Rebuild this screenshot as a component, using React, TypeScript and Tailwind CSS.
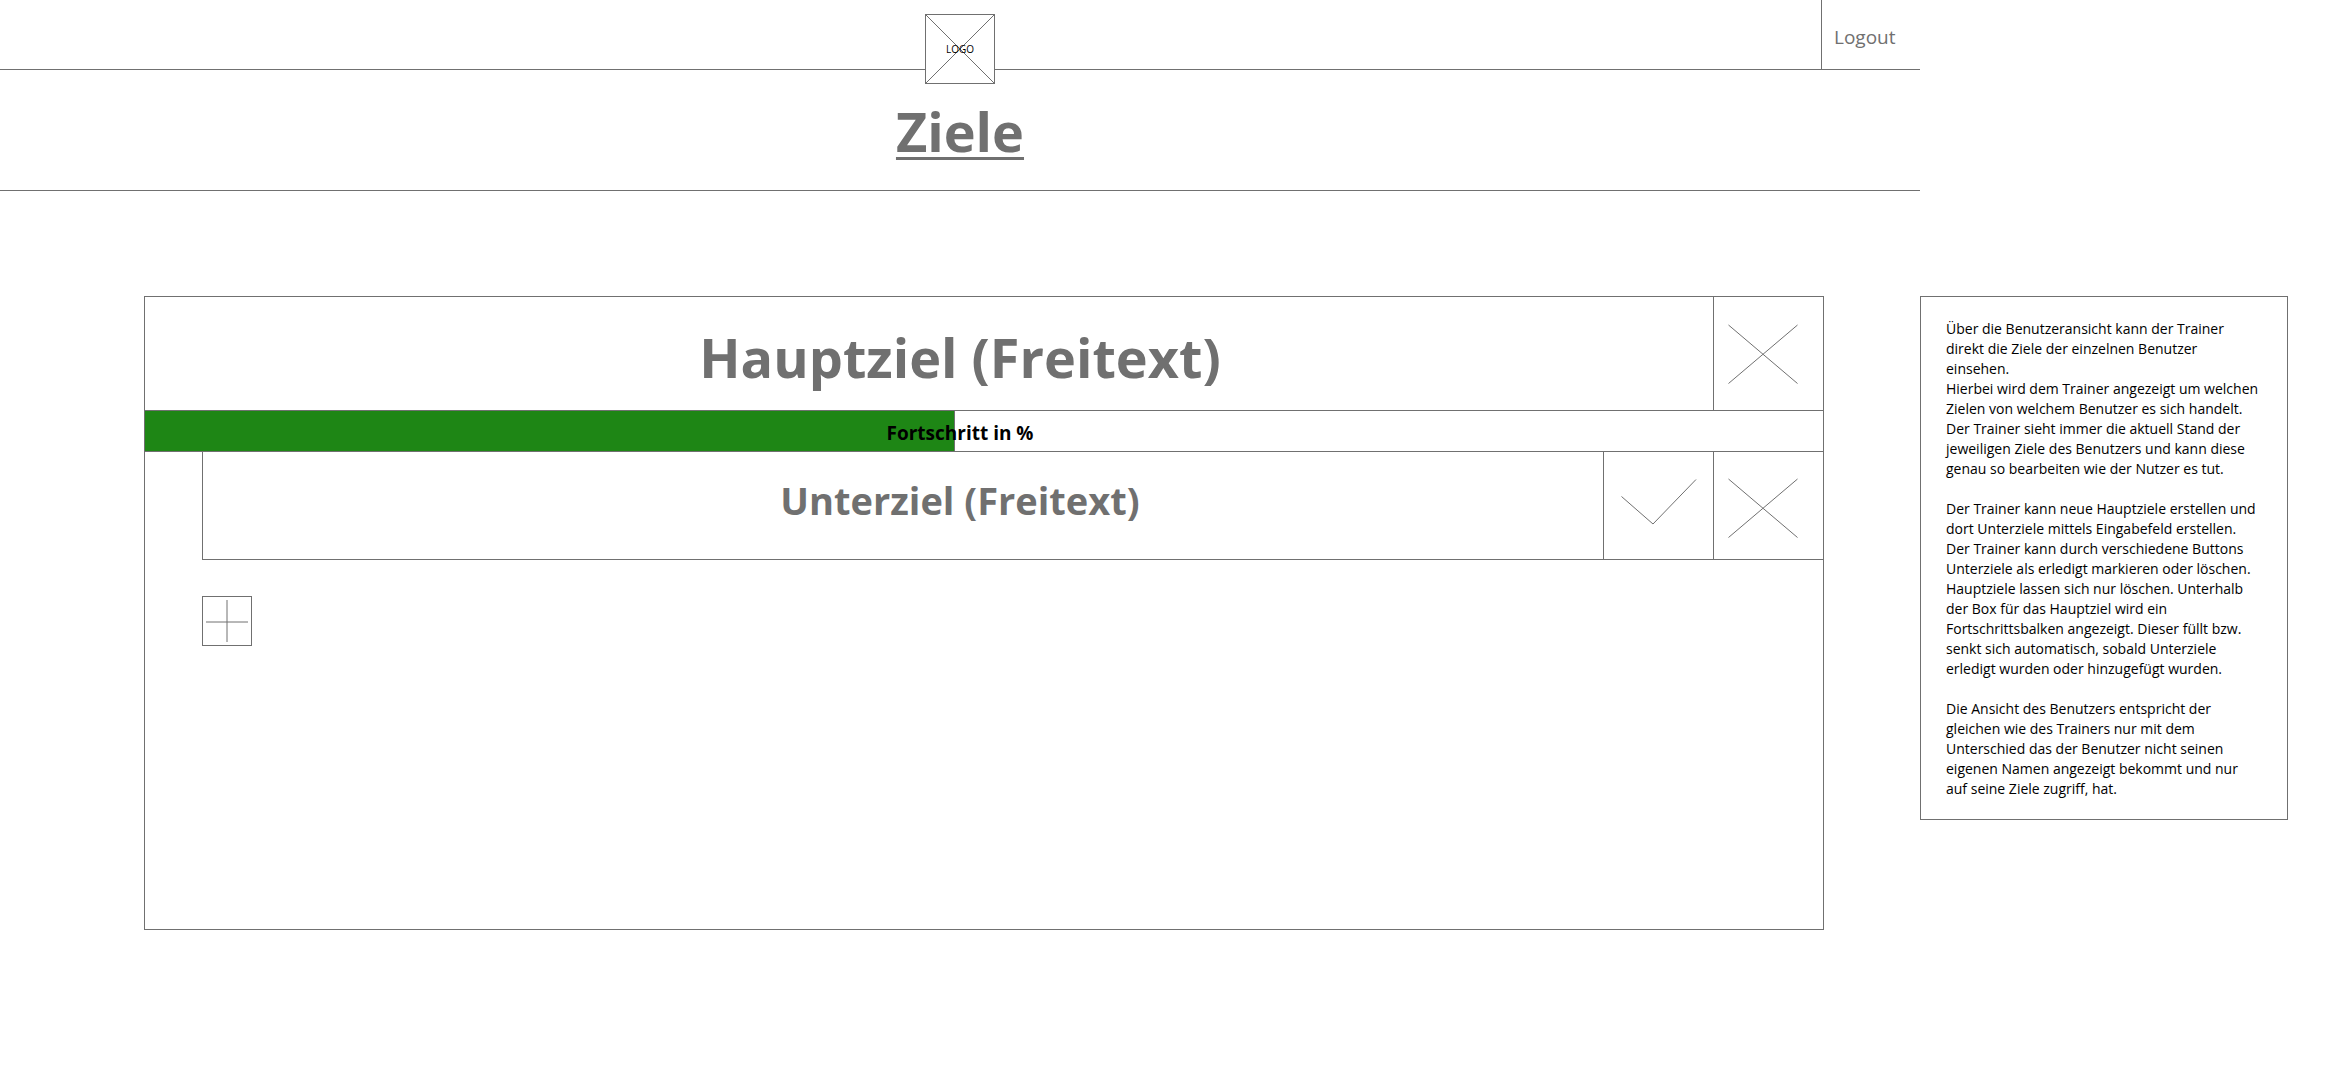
import React from "react";

const PROGRESS = 48.3;

const NOTES = [
  `Über die Benutzeransicht kann der Trainer
direkt die Ziele der einzelnen Benutzer
einsehen.
Hierbei wird dem Trainer angezeigt um welchen
Zielen von welchem Benutzer es sich handelt.
Der Trainer sieht immer die aktuell Stand der
jeweiligen Ziele des Benutzers und kann diese
genau so bearbeiten wie der Nutzer es tut.`,
  `Der Trainer kann neue Hauptziele erstellen und
dort Unterziele mittels Eingabefeld erstellen.
Der Trainer kann durch verschiedene Buttons
Unterziele als erledigt markieren oder löschen.
Hauptziele lassen sich nur löschen. Unterhalb
der Box für das Hauptziel wird ein
Fortschrittsbalken angezeigt. Dieser füllt bzw.
senkt sich automatisch, sobald Unterziele
erledigt wurden oder hinzugefügt wurden.`,
  `Die Ansicht des Benutzers entspricht der
gleichen wie des Trainers nur mit dem
Unterschied das der Benutzer nicht seinen
eigenen Namen angezeigt bekommt und nur
auf seine Ziele zugriff, hat.`,
];

function CrossIcon() {
  return (
    <svg width="70" height="60" viewBox="0 0 70 60" fill="none" stroke="#707070" aria-hidden="true">
      <path d="M0.5 1L69.5 59.5M69.5 1L0.5 59.5" />
    </svg>
  );
}

function CheckIcon() {
  return (
    <svg width="76" height="46" viewBox="0 0 76 46" fill="none" stroke="#707070" aria-hidden="true">
      <path d="M0.5 17.5L32 45L75 0.5" />
    </svg>
  );
}

function PlusIcon() {
  return (
    <svg width="48" height="48" viewBox="0 0 48 48" fill="none" stroke="#707070" aria-hidden="true">
      <path d="M3 25H45M24 3V45" />
    </svg>
  );
}

function Logo() {
  return (
    <div className="absolute left-1/2 top-3.5 grid size-[70px] -translate-x-1/2 place-items-center border border-[#707070] bg-white">
      <svg className="col-start-1 row-start-1" width="68" height="68" viewBox="0 0 68 68" stroke="#707070" aria-hidden="true">
        <path d="M0 0L68 68M68 0L0 68" />
      </svg>
      <span className="relative col-start-1 row-start-1 text-[10px] text-black">LOGO</span>
    </div>
  );
}

export default function App() {
  return (
    <div className="flex min-h-screen items-start bg-white font-['Open_Sans',sans-serif] text-[#707070]">
      <div className="min-w-0 flex-1">
        <header className="relative flex h-[70px] justify-end border-b border-[#707070]">
          <Logo />
          <a href="#logout" className="flex w-[99px] items-center border-l border-[#707070] pl-3 pt-1 text-[19px] leading-6 hover:underline">
            Logout
          </a>
        </header>
        <div className="flex h-[121px] items-center justify-center border-b border-[#707070] pt-0.5">
          <h1 className="text-[54px] font-bold leading-[64px] underline decoration-[3px] underline-offset-[5px]">Ziele</h1>
        </div>

        <main className="ml-36 mr-24 mt-[105px] min-h-[634px] border border-[#707070]">
          <div className="flex h-[114px] border-b border-[#707070]">
            <h2 className="flex flex-1 items-center justify-center pl-[62px] pt-1.5 text-[54px] font-bold leading-[64px]">
              Hauptziel (Freitext)
            </h2>
            <button type="button" aria-label="Hauptziel löschen" className="flex w-[110px] items-center justify-center border-l border-[#707070] pr-3">
              <CrossIcon />
            </button>
          </div>

          <div
            role="progressbar"
            aria-label="Fortschritt"
            aria-valuenow={PROGRESS}
            aria-valuemin={0}
            aria-valuemax={100}
            className="grid h-[41px] border-b border-[#707070]"
          >
            <div className="col-start-1 row-start-1 border-r border-[#707070] bg-[#1e8615]" style={{ width: `${PROGRESS}%` }} />
            <span className="col-start-1 row-start-1 self-center justify-self-center pr-12 pt-1 text-[19px] font-bold leading-6 text-black">
              Fortschritt in %
            </span>
          </div>

          <div className="ml-[57px] flex h-[108px] border-b border-l border-[#707070]">
            <h3 className="flex flex-1 items-center justify-center pb-3 pl-[114px] text-[38px] font-bold leading-[48px]">
              Unterziel (Freitext)
            </h3>
            <button type="button" aria-label="Unterziel erledigt" className="flex w-[110px] items-center justify-center border-l border-[#707070] pb-2">
              <CheckIcon />
            </button>
            <button type="button" aria-label="Unterziel löschen" className="flex w-[110px] items-center justify-center border-l border-[#707070] pr-3 pt-1">
              <CrossIcon />
            </button>
          </div>

          <button type="button" aria-label="Unterziel hinzufügen" className="ml-[57px] mt-9 block size-[50px] border border-[#707070]">
            <PlusIcon />
          </button>
        </main>
      </div>

      <aside className="mr-[53px] mt-[296px] flex w-[368px] flex-col gap-5 border border-[#707070] pb-5 pl-[25px] pt-[22px] text-[14px] leading-5 text-black">
        {NOTES.map((note) => (
          <p key={note} className="whitespace-pre-line">
            {note}
          </p>
        ))}
      </aside>
    </div>
  );
}
